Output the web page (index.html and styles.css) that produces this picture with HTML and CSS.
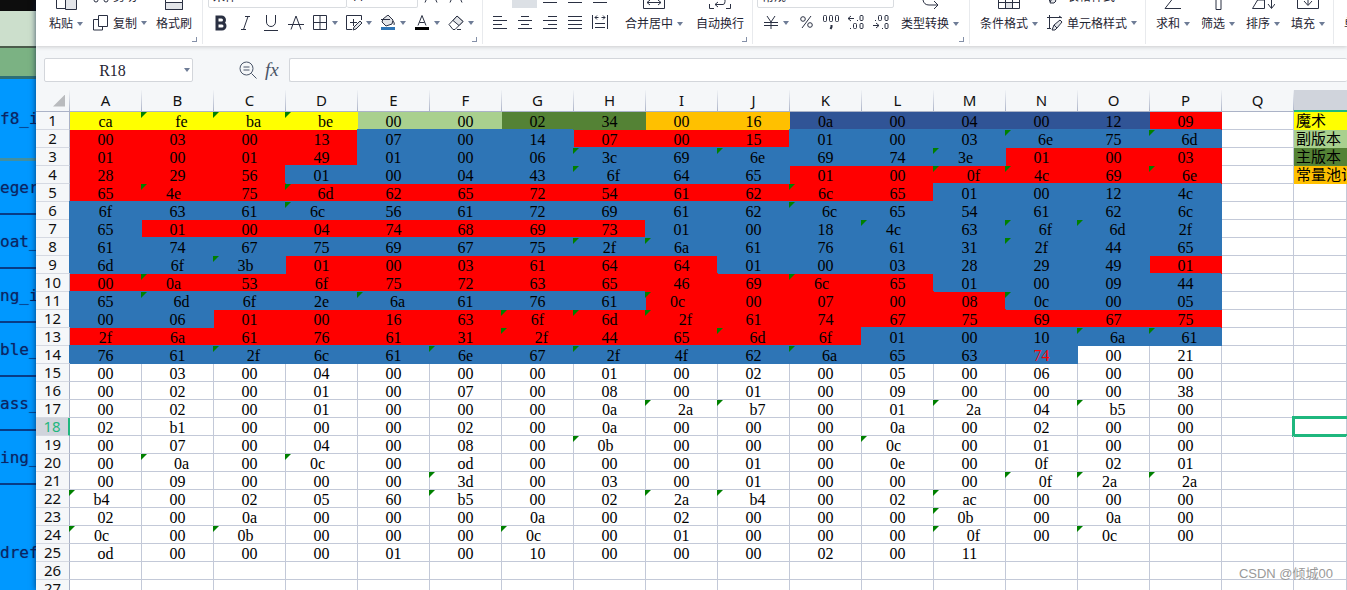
FILE: index.html
```html
<!DOCTYPE html>
<html lang="zh-CN">
<head>
<meta charset="utf-8">
<title>表格</title>
<link rel="stylesheet" href="styles.css">
</head>
<body>
<div class="desktop">
  <aside class="behind">
    <div class="behind-dark"></div>
    <div class="behind-pale"></div>
    <div class="behind-green"></div>
    <div class="behind-row first">f8_i</div>
    <div class="behind-row">eger</div>
    <div class="behind-row">oat_</div>
    <div class="behind-row">ng_i</div>
    <div class="behind-row">ble_</div>
    <div class="behind-row">ass_</div>
    <div class="behind-row">ing_</div>
    <div class="behind-row last">dref</div>
  </aside>

  <main class="app">
    <div class="ribbon">
      <section class="group clip">
        <button class="big paste"><svg width="22" height="26"><path d="M12 24.500H.5V3.500H18.500V12"/><path class="soft" d="M9.500 10.500h11v15h-11z"/></svg><span class="drop">粘贴</span></button>
        <div class="stack">
          <div class="row"><button class="small"><svg width="16" height="16"><path d="M4 1l6 9M12 1L6 9"/><circle cx="3" cy="12" r="2"/><circle cx="13" cy="12" r="2"/></svg>剪切</button></div>
          <div class="row"><button class="small drop"><svg width="16" height="16"><path d="M5.500.5h9v11h-9zM5 4.500H.5v10.500h9V12"/></svg>复制</button></div>
        </div>
        <button class="big"><svg width="20" height="26"><path d="M1.500 25.500v-12h17v12zM6 13V5h8v8"/><path class="soft" d="M1.500 18.500h17v7h-17z"/></svg><span>格式刷</span></button>
        <i class="corner"></i>
      </section>

      <section class="group font">
        <div class="stack">
          <div class="row">
            <select class="combo name" aria-label="字体"><option>宋体</option></select><select class="combo size" aria-label="字号"><option>11</option></select>
            <button class="tool" aria-label="增大字号"><svg width="16" height="16"><path d="M2 14.500L8 1l6 13.500M4 10.500h8"/></svg></button>
            <button class="tool" aria-label="减小字号"><svg width="16" height="16"><path d="M2 14.500L8 1l6 13.500M4 10.500h8"/></svg></button>
          </div>
          <div class="row">
            <button class="tool" aria-label="加粗"><svg width="16" height="16"><path class="heavy" d="M4 2h4.500a2.800 2.800 0 0 1 0 6H4zM4 8h5a3 3 0 0 1 0 6H4z"/></svg></button>
            <button class="tool" aria-label="倾斜"><svg width="16" height="16"><path d="M7 1.500h5M3 14.500h5M10 1.500l-4.500 13"/></svg></button>
            <button class="tool" aria-label="下划线"><svg width="16" height="16"><path d="M3.500 0v7a4.500 4.500 0 0 0 9 0V0M1 15.500h14"/></svg></button>
            <button class="tool" aria-label="删除线"><svg width="16" height="16"><path d="M3 14.500L8 1l5 13.500M0 9.500h16"/></svg></button>
            <button class="pick drop" aria-label="边框"><svg width="16" height="16"><path d="M1.500.5h13v14h-13zM8 .5v14M1.500 7.500h13"/></svg></button>
            <button class="pick drop" aria-label="绘制边框"><svg width="16" height="16"><path d="M15.500 5V.5H.5v14H6M4 7.500h7M7.500 4v7"/><path class="soft" d="M14 6l2 2-6 6-3 1 1-3z"/></svg></button>
            <button class="pick drop" aria-label="填充颜色"><svg width="16" height="16"><path class="soft" d="M3 4l5-4 5 5-1 4-6 2-4-4z"/><path d="M1 4.500h9M13 6q2 2 1 4"/><path class="fillblue" d="M1 12h14v3H1z"/></svg></button>
            <button class="pick drop" aria-label="字体颜色"><svg width="16" height="16"><path d="M4 10.500L8 .5l4 10M5.500 7.500h5"/><path class="fillblack" d="M1 12h14v3H1z"/></svg></button>
            <button class="pick drop" aria-label="清除"><svg width="16" height="16"><path d="M1 9.500L9 1l6 5.500-8 8H5z"/><path class="soft" d="M5 5.500L9 1l6 5.500-4 4z"/><path d="M9 14.500h4"/></svg></button>
          </div>
        </div>
        <i class="corner"></i>
      </section>

      <section class="group align">
        <div class="stack">
          <div class="row">
            <button class="tool" aria-label="顶端对齐"><svg width="16" height="16"><path d="M1 1.500h14M4 5.500h8"/></svg></button>
            <button class="tool on" aria-label="垂直居中"><svg width="16" height="16"><path d="M4 3.500h8M1 7.500h14"/></svg></button>
            <button class="tool" aria-label="底端对齐"><svg width="16" height="16"><path d="M4 9.500h8M1 14.500h14"/></svg></button>
            <button class="tool" aria-label="减少缩进"><svg width="16" height="16"><path d="M1 1.500h14M1 14.500h14M8 7.500h7"/></svg></button>
            <button class="tool" aria-label="增加缩进"><svg width="16" height="16"><path d="M1 1.500h14M1 14.500h14M8 7.500h7"/></svg></button>
          </div>
          <div class="row">
            <button class="tool" aria-label="左对齐"><svg width="16" height="16"><path d="M1 1.500h9M1 5.500h14M1 9.500h9M1 13.500h14"/></svg></button>
            <button class="tool" aria-label="居中"><svg width="16" height="16"><path d="M4 1.500h8M1 5.500h14M4 9.500h8M1 13.500h14"/></svg></button>
            <button class="tool" aria-label="右对齐"><svg width="16" height="16"><path d="M6 1.500h9M1 5.500h14M6 9.500h9M1 13.500h14"/></svg></button>
            <button class="tool" aria-label="两端对齐"><svg width="16" height="16"><path d="M1 1.500h14M1 5.500h14M1 9.500h14M1 13.500h14"/></svg></button>
            <button class="tool" aria-label="分散对齐"><svg width="16" height="16"><path d="M.5 0v14M15.500 0v14M3 2.500h3.500M9.500 2.500H13M5 .5l-2 2 2 2M11 .5l2 2-2 2M3 8.500h10M3 12.500h10"/></svg></button>
          </div>
        </div>
        <button class="big"><svg width="22" height="26"><path d="M.5 4.500h21v20H.5zM4 18.500h14M7 16l-3 2.500L7 21M15 16l3 2.500-3 2.500"/></svg><span class="drop">合并居中</span></button>
        <button class="big"><svg width="22" height="26"><path d="M.5 20v4.500H5M17 24.500h4.500V20M6 20.500h8q2 0 2-3V12M9 18l-3 2.500L9 23"/></svg><span>自动换行</span></button>
        <i class="corner"></i>
      </section>

      <section class="group number">
        <div class="stack">
          <div class="row"><select class="combo format" aria-label="数字格式"><option>常规</option></select></div>
          <div class="row">
            <button class="pick money drop" aria-label="货币"><svg width="16" height="16"><path d="M4 1l4 6 4-6M1 7.500h14M1 10.500h14M8 7v7"/></svg></button>
            <button class="tool" aria-label="百分比"><svg width="16" height="16"><circle cx="5" cy="4" r="2.300"/><circle cx="12" cy="10" r="2.300"/><path d="M13 1L4 13"/></svg></button>
            <button class="tool" aria-label="千位分隔"><svg width="18" height="16"><rect x="1.500" y=".5" width="3" height="6" rx="1"/><rect x="7.500" y=".5" width="3" height="6" rx="1"/><rect x="13.500" y=".5" width="3" height="6" rx="1"/><path class="mid" d="M9.500 10v2l-1 2"/></svg></button>
            <button class="tool" aria-label="增加小数位"><svg width="18" height="16"><path d="M1 3.500h6M4 1L1 3.500 4 6M10 5.500h1M3 13.500h1"/><rect x="13" y=".5" width="3" height="5" rx="1"/><rect x="6.500" y="8.500" width="3" height="5" rx="1"/><rect x="13" y="8.500" width="3" height="5" rx="1"/></svg></button>
            <button class="tool" aria-label="减少小数位"><svg width="18" height="16"><path d="M1 10.500h6M4 8l3 2.500L4 13M3 5.500h1M10 13.500h1"/><rect x="6.500" y=".5" width="3" height="5" rx="1"/><rect x="13" y=".5" width="3" height="5" rx="1"/><rect x="13" y="8.500" width="3" height="5" rx="1"/></svg></button>
          </div>
        </div>
        <button class="big"><svg width="20" height="26"><path d="M3 10v6q1 5 6 5h9M14 17l4 4-4 4"/></svg><span class="drop">类型转换</span></button>
        <i class="corner"></i>
      </section>

      <section class="group styles">
        <button class="big"><svg width="22" height="26"><path class="soft" d="M7.500 18.500h7v6h-7z"/><path d="M.5 4.500h21v20H.5zM.5 18.500h21M7.500 10v14M14.500 10v14"/></svg><span class="drop">条件格式</span></button>
        <div class="stack">
          <div class="row"><button class="small"><svg width="16" height="16"><path d="M1 1.500h14M2 13l5-5 4-4 2 2-7 8z"/><path class="soft" d="M4 12l3-2 2 3-2 2H3z"/></svg>表格样式</button></div>
          <div class="row"><button class="small drop"><svg width="16" height="16"><path d="M0 2.500h14M2.500 0v13M0 13.500h4M12 1l3 2"/><path class="soft" d="M13 5l2 2-5 6-3-3zM7 10l3 3-2 2H5z"/></svg>单元格样式</button></div>
        </div>
      </section>

      <section class="group edit">
        <button class="big"><svg width="18" height="26"><path d="M16 4H2l8 9-9 11.500h16"/></svg><span class="drop">求和</span></button>
        <button class="big"><svg width="18" height="26"><path d="M7 11v14.500h5V11l5-7H2z"/></svg><span class="drop">筛选</span></button>
        <button class="big"><svg width="24" height="26"><path d="M3 4h9M9 12L1.500 24.500h12V16H6M20.500 4v20M17 20l3.500 4.500L24 20"/></svg><span class="drop">排序</span></button>
        <button class="big"><svg width="22" height="26"><path d="M.5 4.500h21v20H.5zM11 8v13M7 17l4 4.500 4-4.500"/></svg><span class="drop">填充</span></button>
      </section>

      <section class="group more">
        <button class="big"><span class="blank"></span><span>单元格</span></button>
      </section>
    </div>

    <div class="formula">
      <label class="namebox drop"><input class="field cellname" value="R18" aria-label="名称框"></label>
      <button class="glyph" aria-label="搜索"><svg width="18" height="18"><circle cx="7.500" cy="7.500" r="6.500"/><path d="M12.500 12.500l5 5M4.500 6h6M4.500 9h6"/></svg></button>
      <button class="glyph fx">fx</button>
      <input class="field entry" aria-label="编辑栏">
    </div>

    <table class="sheet" id="sheet"></table>
  </main>
  <div class="mark">CSDN @倾城00</div>
</div>
<script src="sheet.js"></script>
</body>
</html>
```

FILE: styles.css
```css
* { box-sizing: border-box; }
body {
  margin: 0;
  overflow: hidden;
  font-family: "Noto Sans", "Noto Sans CJK SC", sans-serif;
  font-size: 12px;
  color: #1f2533;
}
button {
  padding: 0;
  border: 0;
  background: none;
  font: inherit;
  color: inherit;
  white-space: nowrap;
}
svg {
  display: block;
  flex: none;
  fill: none;
  stroke: #2a3042;
  stroke-width: 1;
}
.soft { fill: #e3e5e9; }
.heavy { stroke-width: 3; }
.mid { stroke-width: 2; }
.fillblue { fill: #2e75b6; stroke: none; }
.fillblack { fill: #000; stroke: none; }

.desktop {
  position: relative;
  display: grid;
  grid-template-columns: 36px minmax(0, 1fr);
  height: 100vh;
  overflow: hidden;
}

/* window behind */
.behind {
  overflow: hidden;
  background: #0098ff;
  font: 16px "DejaVu Sans Mono", monospace;
  color: #0b2463;
  text-shadow: 0 0 1px rgba(11, 36, 99, .5);
}
.behind-dark { height: 11px; background: #0d0d0d; }
.behind-pale { height: 37px; background: #ccdfcc; border-bottom: 2px solid #4b5c4b; }
.behind-green { height: 31px; background: #7bb283; border-bottom: 3px solid #2c6f77; }
.behind-row {
  display: flex;
  align-items: center;
  height: 54px;
  border-bottom: 2px solid #083c86;
}
.behind-row.first { height: 82px; border-bottom: 3px solid #438fa0; }
.behind-row.last { height: 136px; }

.app {
  overflow: hidden;
  background: #f5f7f9;
  box-shadow: 0 0 6px rgba(0, 20, 60, .7);
  position: relative;
}

/* ribbon */
.ribbon {
  display: flex;
  height: 62px;
  margin-top: -16px;
  background: #fff;
  box-shadow: 0 1px 4px rgba(0, 0, 0, .18);
}
.group {
  position: relative;
  display: flex;
  flex: none;
  height: 60px;
  border-right: 1px solid #e8eaed;
}
.clip { width: 167px; padding-left: 13px; gap: 9px; }
.font { width: 280px; padding-left: 5px; }
.align { width: 270px; padding-left: 4px; gap: 13px; }
.number { width: 217px; padding-left: 4px; gap: 7px; }
.styles { width: 176px; padding-left: 10px; gap: 9px; }
.edit { width: 188px; padding-left: 10px; gap: 11px; }
.more { padding-left: 10px; border: 0; }
.paste { width: 35px; }

.stack { display: flex; flex-direction: column; }
.row { display: flex; align-items: center; height: 30px; }
.row:first-child { height: 24px; }
.big {
  display: flex;
  flex-direction: column;
  align-items: flex-start;
}
.big svg { align-self: center; }
.big span { line-height: 28px; }
.blank { height: 26px; }
.small { display: flex; align-items: center; gap: 4px; height: 24px; }
.tool { display: flex; align-items: center; justify-content: center; width: 25px; height: 24px; }
.pick { display: flex; align-items: center; width: 34px; height: 24px; }
.font .tool + .pick { margin-left: 4px; }
.money { width: 36px; padding-left: 6px; }
.on { background: #dce0e5; }

.drop { display: flex; align-items: center; }
.drop::after {
  content: "";
  flex: none;
  margin-left: 4px;
  border: 3px solid transparent;
  border-top: 4px solid #6e7c96;
  border-bottom: 0;
}
.small.drop::after { margin-left: 0; }
.corner {
  position: absolute;
  right: 5px;
  bottom: 2px;
  width: 5px;
  height: 5px;
  border-right: 1px solid #8490a8;
  border-bottom: 1px solid #8490a8;
}
.combo {
  appearance: none;
  height: 24px;
  padding: 0 4px;
  border: 1px solid #d9dce0;
  border-radius: 2px;
  background: #fff;
  font: inherit;
  color: inherit;
}
.name { width: 139px; }
.size { width: 71px; border-left: 0; }
.format { width: 137px; }

/* formula bar */
.formula {
  display: flex;
  align-items: center;
  height: 44px;
  padding: 4px 0 0 8px;
}
.field {
  height: 24px;
  border: 1px solid #d3d6db;
  border-radius: 2px;
  background: #fff;
  font: 16px "Liberation Serif", serif;
  color: #1f2533;
}
.namebox { position: relative; width: 149px; margin-right: 46px; }
.namebox::after { position: absolute; right: 3px; }
.cellname { width: 100%; padding: 2px 12px 0 0; text-align: center; }
.glyph { width: 18px; height: 24px; display: flex; align-items: center; color: #4a5568; }
.glyph svg { stroke: #4a5568; }
.fx { margin: 0 6px 0 8px; font: italic 19px "Liberation Serif", serif; }
.entry { flex: 1; min-width: 0; border-right: 0; }

/* sheet */
.sheet {
  width: 100%;
  table-layout: fixed;
  border-collapse: separate;
  border-spacing: 0;
  background: #fff;
}
.sheet th {
  padding: 0;
  background: #f5f7f9;
  font-size: 15px;
  font-weight: 400;
  line-height: 17px;
  color: #111;
}
.col-head { width: 72px; }
.corner-head { width: 34px; }
.sheet thead th {
  height: 22px;
  border-bottom: 1px solid #a9b1c6;
  border-right: 1px solid;
  border-image: linear-gradient(#f5f7f9, #a9b1c6) 1;
}
.sheet thead .picked {
  background: #d0d4dc;
  border-image: none;
  border-right: 0;
  border-bottom: 2px solid #1fb77e;
}
.all {
  width: 12px;
  height: 12px;
  margin-left: 17px;
  background: #b9bbbe;
  clip-path: polygon(100% 0, 100% 100%, 0 100%);
}
.sheet tbody th {
  border-right: 1px solid #a9b1c6;
  border-bottom: 1px solid #d5d9e2;
}
.sheet tbody .picked {
  background: #d0d4dc;
  border-right: 2px solid #1fb77e;
  color: #1fb77e;
}
.sheet td {
  position: relative;
  height: 18px;
  padding: 1px 0 0;
  border-right: 1px solid #c3c9d8;
  border-bottom: 1px solid #c3c9d8;
  font: 16px "Liberation Serif", "Noto Sans CJK SC", serif;
  line-height: 16px;
  text-align: center;
  color: #000;
}
.sheet .lead { padding-left: 8px; }
.sheet .trail { padding-right: 8px; }
.sheet td:not(.legend) { padding-top: 2px; line-height: 15px; }
.warn::before {
  content: "";
  position: absolute;
  top: 0;
  left: -1px;
  width: 6px;
  height: 6px;
  background: #008000;
  clip-path: polygon(0 0, 100% 0, 0 100%);
}
.sheet .yellow { background: #ff0; border-color: #ff0; }
.sheet .lime { background: #a9d08e; border-color: #a9d08e; }
.sheet .green { background: #548235; border-color: #548235; }
.sheet .orange { background: #ffc000; border-color: #ffc000; }
.sheet .navy { background: #305496; border-color: #305496; }
.sheet .red { background: #f00; border-color: #f00; }
.sheet .blue { background: #2e75b6; border-color: #2e75b6; box-shadow: -1px -1px 0 #2e75b6; }
.sheet .redtext { color: #f00; }
.sheet .legend {
  padding-left: 2px;
  font-size: 15px;
  text-align: left;
  white-space: nowrap;
}
.cursor::after {
  content: "";
  position: absolute;
  inset: -2px;
  right: -8px;
  border: 3px solid #1fb77e;
}
.legend-text { display: block; height: 16px; overflow: hidden; }

.mark {
  position: absolute;
  right: 14px;
  bottom: 6px;
  font: 13px/20px "Liberation Sans", "Noto Sans CJK SC", sans-serif;
  color: #999;
}
```

FILE: sheet.js
```js
// Cell notation: ' marks a warning corner, _ is a leading or trailing space.
const rows = [
  ["ca '_fe '_ba '_be 00 00 02 34 00 16 0a 00 04 00 12 09", "yyyyllggoonnnnnr"],
  ["00 03 00 13 07 00 14 07 00 15 01 00 03 '_6e 75 '_6d", "rrrrbbbrrrbbbbbb"],
  ["01 00 01 49 01 00 06 '3c 69 '_6e 69 74 '3e_ 01 00 03", "rrrrbbbbbbbbbrrr"],
  ["28 29 56 01 00 04 43 '_6f 64 65 01 00 '_0f '4c 69 '_6e", "rrrbbbbbbbrrrrrr"],
  ["65 '4e_ 75 '_6d 62 65 72 54 61 62 '6c 65 01 00 12 4c", "rrrrrrrrrrrrbbbb"],
  ["6f 63 61 '6c_ 56 61 72 69 61 62 '_6c 65 54 61 62 6c", "bbbbbbbbbbbbbbbb"],
  ["65 01 00 04 74 68 69 73 01 00 18 '4c_ 63 '_6f '_6d 2f", "brrrrrrrbbbbbbbb"],
  ["61 74 67 75 69 67 75 '2f '6a 61 76 61 31 '2f 44 65", "bbbbbbbbbbbbbbbb"],
  ["6d 6f '3b_ 01 00 03 61 64 64 01 00 03 28 29 49 01", "bbbrrrrrrbbbbbbr"],
  ["00 '0a_ 53 6f 75 72 63 65 46 69 '6c_ 65 01 00 09 44", "rrrrrrrrrrrrbbbb"],
  ["65 '_6d 6f 2e '_6a 61 76 61 '0c_ 00 07 00 08 '0c 00 05", "bbbbbbbbrrrrrbbb"],
  ["00 06 01 00 16 63 '6f '6d '_2f 61 74 67 75 69 67 75", "bbrrrrrrrrrrrrrr"],
  ["2f 6a 61 76 61 31 '_2f 44 65 '_6d 6f 01 00 10 '_6a '_61", "rrrrrrrrrrrbbbbb"],
  ["76 61 '_2f 6c 61 '6e 67 '_2f 4f 62 '_6a 65 63 74 00 21", "bbbbbbbbbbbbbt  "],
  ["00 03 00 04 00 00 00 01 00 02 00 05 00 06 00 00"],
  ["00 02 00 01 00 07 00 08 00 01 00 09 00 00 00 38"],
  ["00 02 00 01 00 00 00 0a '_2a '_b7 00 01 '_2a 04 '_b5 00"],
  ["02 b1 00 00 00 02 00 0a 00 00 00 0a 00 02 00 00"],
  ["00 07 00 04 00 08 00 '0b_ 00 00 00 '0c_ 00 01 00 00"],
  ["00 '_0a 00 '0c_ 00 od 00 00 00 01 00 0e 00 0f 02 01"],
  ["00 09 00 00 00 '3d 00 03 00 01 00 00 00 '_0f '2a_ '_2a"],
  ["'b4_ 00 02 05 60 'b5 00 02 '2a '_b4 00 02 'ac 00 00 00"],
  ["02 00 0a 00 00 00 0a 00 02 00 00 00 '0b_ 00 0a 00"],
  ["'0c_ 00 '0b_ 00 00 00 '0c_ 00 01 00 00 00 '_0f 00 '0c_ 00"],
  ["od 00 00 00 01 00 10 00 00 00 02 00 11"],
  [""],
  [""]
];
const fills = { y: "yellow", l: "lime", g: "green", o: "orange", n: "navy", r: "red", b: "blue", t: "blue redtext" };
const legend = [["魔术", "yellow"], ["副版本", "lime"], ["主版本", "green"], ["常量池计数器", "orange"]];

let html = '<thead><tr><th class="corner-head"><div class="all"></div></th>';
for (const name of "ABCDEFGHIJKLMNOPQ") html += `<th class="col-head">${name}</th>`;
html += '<th class="picked"></th></tr></thead><tbody>';

rows.forEach(([text, colours = ""], index) => {
  const cells = text.split(" ");
  html += `<tr><th class="${index === 17 ? "picked" : ""}">${index + 1}</th>`;
  for (let i = 0; i < 17; i++) {
    const cell = cells[i] || "";
    const names = [fills[colours[i]] || ""];
    if (cell.startsWith("'")) names.push("warn");
    if (cell.includes("_")) names.push(cell.endsWith("_") ? "trail" : "lead");
    html += `<td class="${names.join(" ").trim()}">${cell.replace(/['_]/g, "")}</td>`;
  }
  if (legend[index]) {
    html += `<td class="legend ${legend[index][1]}"><span class="legend-text">${legend[index][0]}</span></td>`;
  } else {
    html += `<td class="${index === 17 ? "cursor" : ""}"></td>`;
  }
  html += "</tr>";
});
document.getElementById("sheet").innerHTML = html + "</tbody>";
```
